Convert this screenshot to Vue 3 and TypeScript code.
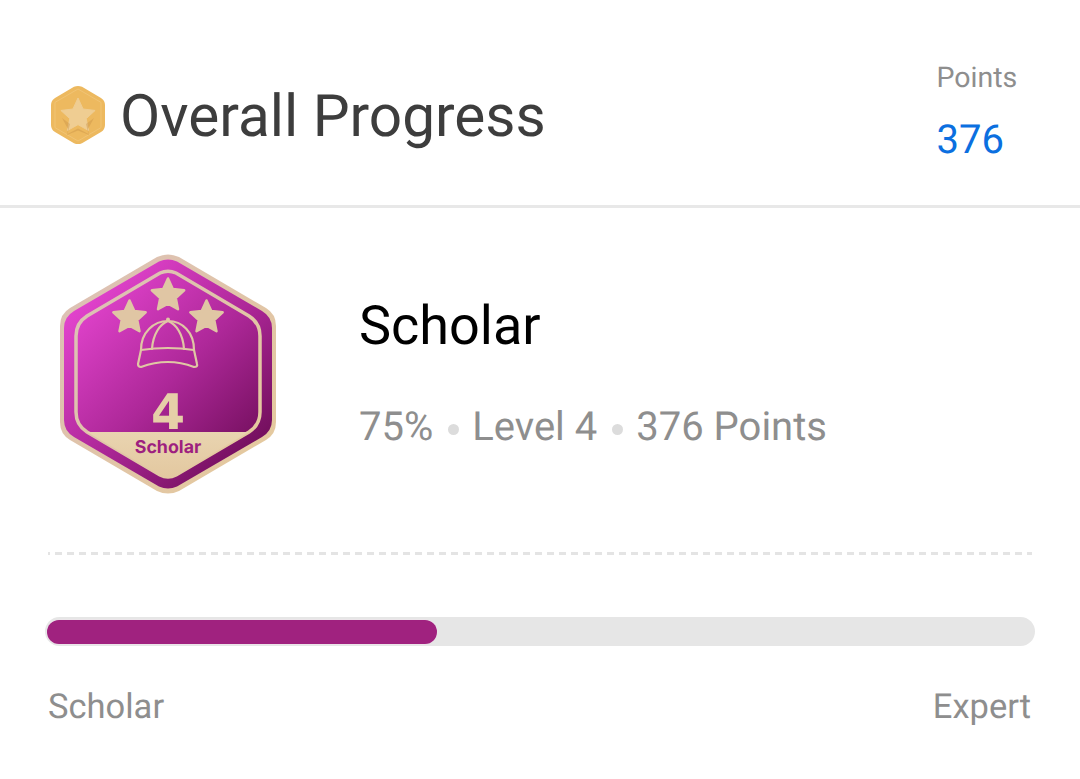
<script setup lang="ts">
const stars: Array<[number, number, number]> = [
  [108, 41.5, 18],
  [69.5, 63.5, 18],
  [146.5, 63.5, 18],
]
function starPath(cx: number, cy: number, r: number): string {
  const pts: string[] = []
  for (let i = 0; i < 10; i++) {
    const rad = i % 2 === 0 ? r : r * 0.48
    const a = -Math.PI / 2 + (i * Math.PI) / 5
    pts.push(`${(cx + rad * Math.cos(a)).toFixed(2)},${(cy + rad * Math.sin(a)).toFixed(2)}`)
  }
  return pts.join(' ')
}
const fillPercent = 39.6
</script>

<template>
  <div class="page">
    <header class="head">
      <div class="title-wrap">
        <svg class="medal" viewBox="0 0 54 60" width="54" height="60">
          <path d="M23 1.800Q27 0 31 1.800L50 13Q54 15.500 54 20V40Q54 44.500 50 47L31 58.200Q27 60 23 58.200L4 47Q0 44.500 0 40V20Q0 15.500 4 13Z" fill="#edb95f" />
          <path d="M27 4L50 17.400V42.600L27 56L4 42.600V17.400Z" fill="none" stroke="#f1c475" stroke-width="1" stroke-linejoin="round" />
          <polygon :points="starPath(27, 31, 18)" fill="#efcd92" stroke="#efcd92" stroke-width="1" stroke-linejoin="round" />
          <path d="M11 33L19 39L16.500 49L27 43.500L37.500 49L35 39L43 33L37 44L38 50L27 45.500L16 50L17 44Z" fill="#c99245" opacity="0.4" />
        </svg>
        <h1 class="title">Overall Progress</h1>
      </div>
      <div class="points">
        <div class="points-label">Points</div>
        <div class="points-value">376</div>
      </div>
    </header>

    <section class="level">
      <svg class="badge" viewBox="0 0 216 240" width="216" height="240">
        <defs>
          <linearGradient id="gold" x1="0" y1="0" x2="1" y2="1">
            <stop offset="0" stop-color="#dcc0b8" />
            <stop offset="0.5" stop-color="#e0c4a8" />
            <stop offset="1" stop-color="#e6cb9c" />
          </linearGradient>
          <linearGradient id="magenta" x1="0.1" y1="0.12" x2="0.8" y2="0.9">
            <stop offset="0" stop-color="#e545d0" />
            <stop offset="0.55" stop-color="#ae2899" />
            <stop offset="1" stop-color="#761060" />
          </linearGradient>
          <linearGradient id="ribbon" x1="0" y1="0" x2="0" y2="1">
            <stop offset="0" stop-color="#e9d4b0" />
            <stop offset="1" stop-color="#e3c8a0" />
          </linearGradient>
        </defs>
        <path d="M97 3Q108 -2 119 3L206 54Q216 60 216 72V168Q216 180 206 186L119 237Q108 242 97 237L10 186Q0 180 0 168V72Q0 60 10 54Z" fill="url(#gold)" />
        <path d="M99 7.500Q108 3.500 117 7.500L202 57Q212 63 212 74V166Q212 177 202 183L117 232.500Q108 236.500 99 232.500L14 183Q4 177 4 166V74Q4 63 14 57Z" fill="url(#magenta)" />
        <path d="M100 19Q108 15.500 116 19L189 62Q200 69 200 82V158Q200 171 189 178L116 221Q108 225 100 221L27 178Q16 171 16 158V82Q16 69 27 62Z" fill="none" stroke="url(#gold)" stroke-width="3.500" />
        <path d="M27 178H189L116 221Q108 225 100 221Z" fill="url(#ribbon)" />
        <polygon v-for="(s, i) in stars" :key="i" :points="starPath(s[0], s[1], s[2] - 1)" fill="#e0c6a4" stroke="#e0c6a4" stroke-width="2.500" stroke-linejoin="round" />
        <g fill="none" stroke="#e0c6a4" stroke-width="2.200" stroke-linecap="round" stroke-linejoin="round">
          <path d="M81 96C81 78 94 67 108 67C122 67 134 78 134 96" />
          <path d="M92 95C93 80 100 70 108 67C116 70 123 80 124 95" />
          <path d="M81 96Q108 92 134 96" />
          <path d="M81 96L78 110Q78 113 81 113Q108 103 134 113Q138 113 137 110L134 96" />
        </g>
        <circle cx="108" cy="65.500" r="2" fill="#e0c6a4" />
        <text class="badge-num" x="108" y="175" text-anchor="middle">4</text>
        <text class="badge-name" x="108" y="199" text-anchor="middle">Scholar</text>
      </svg>
      <div class="level-info">
        <div class="level-name">Scholar</div>
        <div class="level-meta">
          <span>75%</span><i class="dot"></i><span>Level 4</span><i class="dot"></i><span>376 Points</span>
        </div>
      </div>
    </section>

    <div class="dash"></div>

    <section class="progress">
      <div class="track">
        <div class="fill" :style="{ width: fillPercent + '%' }"></div>
      </div>
      <div class="labels">
        <span>Scholar</span>
        <span>Expert</span>
      </div>
    </section>
  </div>
</template>

<style scoped>
.page {
  width: 1080px;
  height: 779px;
  background: #fff;
  font-family: Roboto, "Liberation Sans", sans-serif;
  text-rendering: geometricPrecision;
  overflow: hidden;
}
.head {
  height: 205px;
  box-sizing: content-box;
  border-bottom: 3px solid #e8e8e8;
  display: flex;
  justify-content: space-between;
  padding: 0 63.500px 0 51px;
}
.title-wrap {
  display: flex;
  align-items: center;
  gap: 15px;
  padding-top: 25px;
}
.medal {
  display: block;
  flex: none;
}
.title {
  margin: 4px 0 0;
  font-size: 58.5px;
  font-weight: 400;
  color: #3d3d3d;
  line-height: 66px;
}
.points {
  width: 80px;
  padding-top: 61px;
}
.points-label {
  font-size: 28.5px;
  line-height: 34px;
  color: #8e8e8e;
}
.points-value {
  font-size: 40px;
  line-height: 46px;
  margin-top: 22px;
  color: #0b6fe0;
}
.level {
  display: flex;
  align-items: flex-start;
  padding: 46px 0 0 60px;
  height: 344px;
  box-sizing: border-box;
}
.badge {
  display: block;
  flex: none;
}
.badge-num {
  font-family: "DejaVu Sans", sans-serif;
  font-weight: 700;
  font-size: 49px;
  fill: #e6cfa8;
}
.badge-name {
  font-family: Inter, sans-serif;
  font-weight: 700;
  font-size: 17.8px;
  fill: #9e1f7f;
}
.level-info {
  margin-left: 83px;
  padding-top: 40px;
}
.level-name {
  font-size: 54px;
  line-height: 66px;
  color: #000;
}
.level-meta {
  margin-top: 44px;
  display: flex;
  align-items: center;
  font-size: 40px;
  line-height: 46px;
  color: #8e8e8e;
}
.dot {
  width: 11px;
  height: 11px;
  border-radius: 50%;
  background: #dcdcdc;
  margin: 4px 13px 0 15px;
}
.dash {
  height: 3px;
  margin: 0 48px;
  background: repeating-linear-gradient(90deg, #e4e4e4 0 7px, transparent 7px 12px) -5px 0;
}
.progress {
  padding: 62px 45px 0;
}
.track {
  height: 29px;
  border-radius: 15px;
  background: #e6e6e6;
  padding: 2.500px 2px;
  box-sizing: border-box;
}
.fill {
  height: 24px;
  border-radius: 12px;
  background: #a0227f;
  box-shadow: 0 0 0 0.500px #efe3ec;
}
.labels {
  display: flex;
  justify-content: space-between;
  padding: 0 4px 0 3px;
  margin-top: 41px;
  font-size: 34.5px;
  line-height: 40px;
  color: #8e8e8e;
}
</style>
